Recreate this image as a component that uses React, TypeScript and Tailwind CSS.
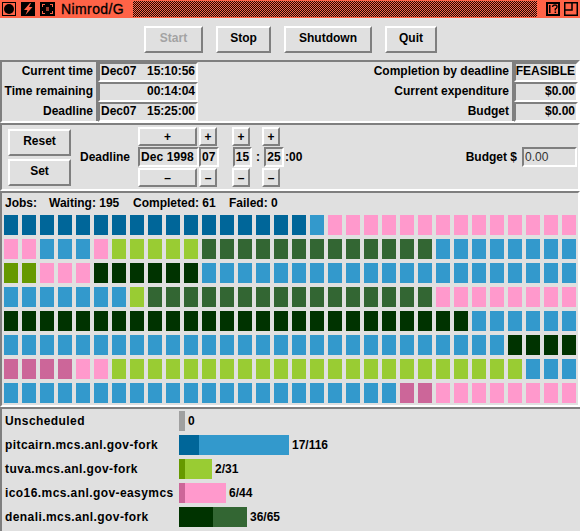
import React from "react";

const C: Record<string, string> = {
  d: "bg-[#006699]",
  b: "bg-[#3399cc]",
  p: "bg-[#ff99cc]",
  m: "bg-[#cc6699]",
  l: "bg-[#99cc33]",
  o: "bg-[#669900]",
  g: "bg-[#336633]",
  k: "bg-[#003300]",
};

const ROWS: [string, number][][] = [
  [["d", 17], ["b", 1], ["p", 14]],
  [["p", 2], ["b", 3], ["p", 1], ["l", 5], ["g", 13], ["b", 8]],
  [["o", 2], ["p", 3], ["k", 6], ["b", 21]],
  [["b", 7], ["l", 1], ["g", 16], ["p", 8]],
  [["k", 26], ["b", 6]],
  [["b", 28], ["k", 4]],
  [["m", 4], ["p", 2], ["l", 23], ["b", 3]],
  [["b", 22], ["m", 2], ["p", 8]],
];

const raised = "border-2 border-t-white border-l-white border-r-[#7f7f7f] border-b-[#7f7f7f]";
const sunken = "border-2 border-t-[#7f7f7f] border-l-[#7f7f7f] border-r-white border-b-white";
const panel = "border-2 border-t-[#7f7f7f] border-l-[#7f7f7f] border-r-white border-b-white";

function Btn({ w, h, children, disabled, lift }: { w: string; h: string; children: React.ReactNode; disabled?: boolean; lift?: boolean }) {
  return (
    <div className={`${w} ${h} ${raised} flex items-center justify-center ${lift ? "pb-[3px]" : ""} ${disabled ? "text-[#a3a3a3]" : "text-black"}`}>
      {children}
    </div>
  );
}

function Label({ children }: { children: React.ReactNode }) {
  return <div className="h-5 flex items-center justify-end pr-[3px] pb-[2px] whitespace-pre">{children}</div>;
}

function Val({ children, w, between }: { children: React.ReactNode; w: string; between?: boolean }) {
  return (
    <div className={`${w} h-5 ${sunken} flex items-center ${between ? "justify-between" : "justify-end"} px-[1px] pb-[2px] whitespace-pre`}>
      {children}
    </div>
  );
}

function Bar({ label, parts, text }: { label: string; parts: [string, string][]; text: string }) {
  return (
    <div className="flex h-5 items-center">
      <div className="w-[175px] pl-px shrink-0 whitespace-pre tracking-[0.42px]">{label}</div>
      <div className="flex h-5">
        {parts.map(([w, c], i) => (
          <div key={i} className={`${w} h-5 ${c}`} />
        ))}
      </div>
      <div className="ml-[3px] whitespace-pre">{text}</div>
    </div>
  );
}

export default function App() {
  return (
    <div className="w-[580px] h-[531px] overflow-hidden bg-[#e0e0e0] text-[12px] leading-[14px] font-bold text-black font-['Liberation_Sans',Arial,sans-serif]">
      {/* title bar */}
      <div className="h-[18px] bg-[#ff6347] flex items-stretch">
        <div className="flex items-center gap-[5px] pl-[2px]">
          <svg width="14" height="16" viewBox="0 0 14 16">
            <rect x="0" y="1" width="14" height="14" fill="#000" />
            <rect x="1" y="2" width="12" height="12" fill="#ff6347" />
            <circle cx="7" cy="8" r="5" fill="#000" />
          </svg>
          <svg width="14" height="16" viewBox="0 0 14 16">
            <rect x="0" y="1" width="14" height="14" fill="#000" />
            <path d="M9 2 L3 9 H6.5 L4.5 14 L11.5 6 H8 L10 2 Z" fill="#ff6347" />
          </svg>
          <svg width="15" height="16" viewBox="0 0 15 16">
            <rect x="0" y="1" width="15" height="14" fill="#000" />
            <path d="M2 3 H5 V4 H3 V6 H2 Z M13 3 H10 V4 H12 V6 H13 Z M2 13 H5 V12 H3 V10 H2 Z M13 13 H10 V12 H12 V10 H13 Z" fill="#ff6347" />
            <rect x="6" y="6" width="3" height="4" fill="#ff6347" opacity="0.6" />
          </svg>
        </div>
        <div className="pl-[6px] pr-[9px] flex items-center text-[14px] tracking-[0.4px] font-normal [-webkit-text-stroke:0.3px_#000]">Nimrod/G</div>
        <div className="flex-1 my-[1px] bg-[repeating-conic-gradient(#1a0a05_0_25%,#ff6347_0_50%)] bg-[length:2px_2px]" />
        <div className="flex items-center gap-1 pl-[9px] pr-[2px]">
          <svg width="14" height="16" viewBox="0 0 14 16">
            <rect x="0" y="1" width="14" height="14" fill="#000" />
            <rect x="2" y="3" width="10" height="10" fill="#ff6347" />
            <rect x="3" y="4" width="1.5" height="8" fill="#000" />
            <path d="M6.5 6 Q6.8 4 9 4 Q11.3 4 11 6 Q10.8 7.2 9.3 8 V9.5" fill="none" stroke="#000" strokeWidth="1.4" />
            <rect x="8.6" y="10.5" width="1.5" height="1.5" fill="#000" />
          </svg>
          <svg width="14" height="16" viewBox="0 0 14 16" fill="none" stroke="#000" strokeWidth="1.5">
            <rect x="0.75" y="1.75" width="12.5" height="12.5" />
            <path d="M8 2 V9 H1" />
          </svg>
        </div>
      </div>

      {/* actions */}
      <div className="h-[42px] pt-2 flex justify-center gap-[13px] pl-[1px]">
        <Btn w="w-[59px]" h="h-[27px]" disabled lift>Start</Btn>
        <Btn w="w-[55px]" h="h-[27px]" lift>Stop</Btn>
        <Btn w="w-[88px]" h="h-[27px]" lift>Shutdown</Btn>
        <Btn w="w-[52px]" h="h-[27px]" lift>Quit</Btn>
      </div>

      {/* status */}
      <div className={`h-[63px] w-full ${panel} flex justify-between`}>
        <div className="flex">
          <div className="w-[96px] border-r-2 border-r-[#7f7f7f]">
            <Label>Current time</Label>
            <Label>Time remaining</Label>
            <Label>Deadline</Label>
          </div>
          <div className="w-[100px]">
            <Val w="w-[100px]" between><span>Dec07</span><span>15:10:56</span></Val>
            <Val w="w-[100px]"><span>00:14:04</span></Val>
            <Val w="w-[100px]" between><span>Dec07</span><span>15:25:00</span></Val>
          </div>
        </div>
        <div className="flex">
          <div className="w-[130px]">
            <Label>Completion by deadline</Label>
            <Label>Current expenditure</Label>
            <Label>Budget</Label>
          </div>
          <div className="w-[66px] border-l-2 border-l-[#7f7f7f]">
            <Val w="w-[64px]"><span>FEASIBLE</span></Val>
            <Val w="w-[64px]"><span>$0.00</span></Val>
            <Val w="w-[64px]"><span>$0.00</span></Val>
          </div>
        </div>
      </div>

      {/* deadline controls */}
      <div className={`h-[68px] ${panel} flex items-center pl-[6px]`}>
        <div className="flex flex-col gap-[3px] w-[64px]">
          <Btn w="w-[63px]" h="h-[27px]" lift>Reset</Btn>
          <Btn w="w-[63px]" h="h-[27px]" lift>Set</Btn>
        </div>
        <div className="ml-[8px] w-[58px]">Deadline</div>
        <div className="flex flex-col gap-[1px]">
          <div className="flex">
            <Btn w="w-[59px]" h="h-[19px]">+</Btn>
            <Btn w="w-[18px] ml-[2px]" h="h-[19px]">+</Btn>
            <Btn w="w-[18px] ml-[15px]" h="h-[19px]">+</Btn>
            <Btn w="w-[18px] ml-[12px]" h="h-[19px]">+</Btn>
          </div>
          <div className="flex items-center h-5">
            <div className={`w-[61px] h-5 ${sunken} flex items-center pl-[1px] whitespace-pre tracking-[0.1px]`}>Dec 1998</div>
            <div className={`w-[20px] h-5 ${sunken} flex items-center pl-[1px]`}>07</div>
            <div className={`w-[19px] h-5 ml-[14px] ${sunken} flex items-center justify-center`}>15</div>
            <div className="w-[12px] text-center">:</div>
            <div className={`w-[20px] h-5 ${sunken} flex items-center justify-center`}>25</div>
            <div className="pl-[1px]">:00</div>
          </div>
          <div className="flex">
            <Btn w="w-[59px]" h="h-[19px]">–</Btn>
            <Btn w="w-[18px] ml-[2px]" h="h-[19px]">–</Btn>
            <Btn w="w-[18px] ml-[15px]" h="h-[19px]">–</Btn>
            <Btn w="w-[18px] ml-[12px]" h="h-[19px]">–</Btn>
          </div>
        </div>
        <div className="flex-1 flex items-center justify-end pr-px">
          <span className="mr-[5px] whitespace-pre">Budget $</span>
          <div className={`w-[55px] h-5 ${sunken} flex items-center pl-[1px] font-normal text-[#333]`}>0.00</div>
        </div>
      </div>

      {/* jobs */}
      <div className={`h-[216px] ${panel} pl-[2px]`}>
        <div className="h-[22px] flex items-center pl-[1px] pb-[3px] whitespace-pre">
          <span className="w-[44px]">Jobs:</span>
          <span className="w-[84px]">Waiting: 195</span>
          <span className="w-[96px]">Completed: 61</span>
          <span>Failed: 0</span>
        </div>
        <div className="flex flex-col gap-1">
          {ROWS.map((row, r) => (
            <div key={r} className="flex gap-1">
              {row.flatMap(([c, n], i) =>
                Array.from({ length: n }, (_, j) => <div key={`${i}-${j}`} className={`w-[14px] h-5 ${C[c]}`} />)
              )}
            </div>
          ))}
        </div>
      </div>

      {/* hosts */}
      <div className="h-[124px] border-l-2 border-l-[#7f7f7f] border-t-2 border-t-[#7f7f7f] pl-[2px] pt-[2px] flex flex-col gap-1">
        <Bar label="Unscheduled" parts={[["w-[6px]", "bg-[#a0a0a0]"]]} text="0" />
        <Bar label="pitcairn.mcs.anl.gov-fork" parts={[["w-5", "bg-[#006699]"], ["w-[90px]", "bg-[#3399cc]"]]} text="17/116" />
        <Bar label="tuva.mcs.anl.gov-fork" parts={[["w-[6px]", "bg-[#669900]"], ["w-[27px]", "bg-[#99cc33]"]]} text="2/31" />
        <Bar label="ico16.mcs.anl.gov-easymcs" parts={[["w-[6px]", "bg-[#cc6699]"], ["w-[41px]", "bg-[#ff99cc]"]]} text="6/44" />
        <Bar label="denali.mcs.anl.gov-fork" parts={[["w-[34px]", "bg-[#003300]"], ["w-[34px]", "bg-[#336633]"]]} text="36/65" />
      </div>
    </div>
  );
}
